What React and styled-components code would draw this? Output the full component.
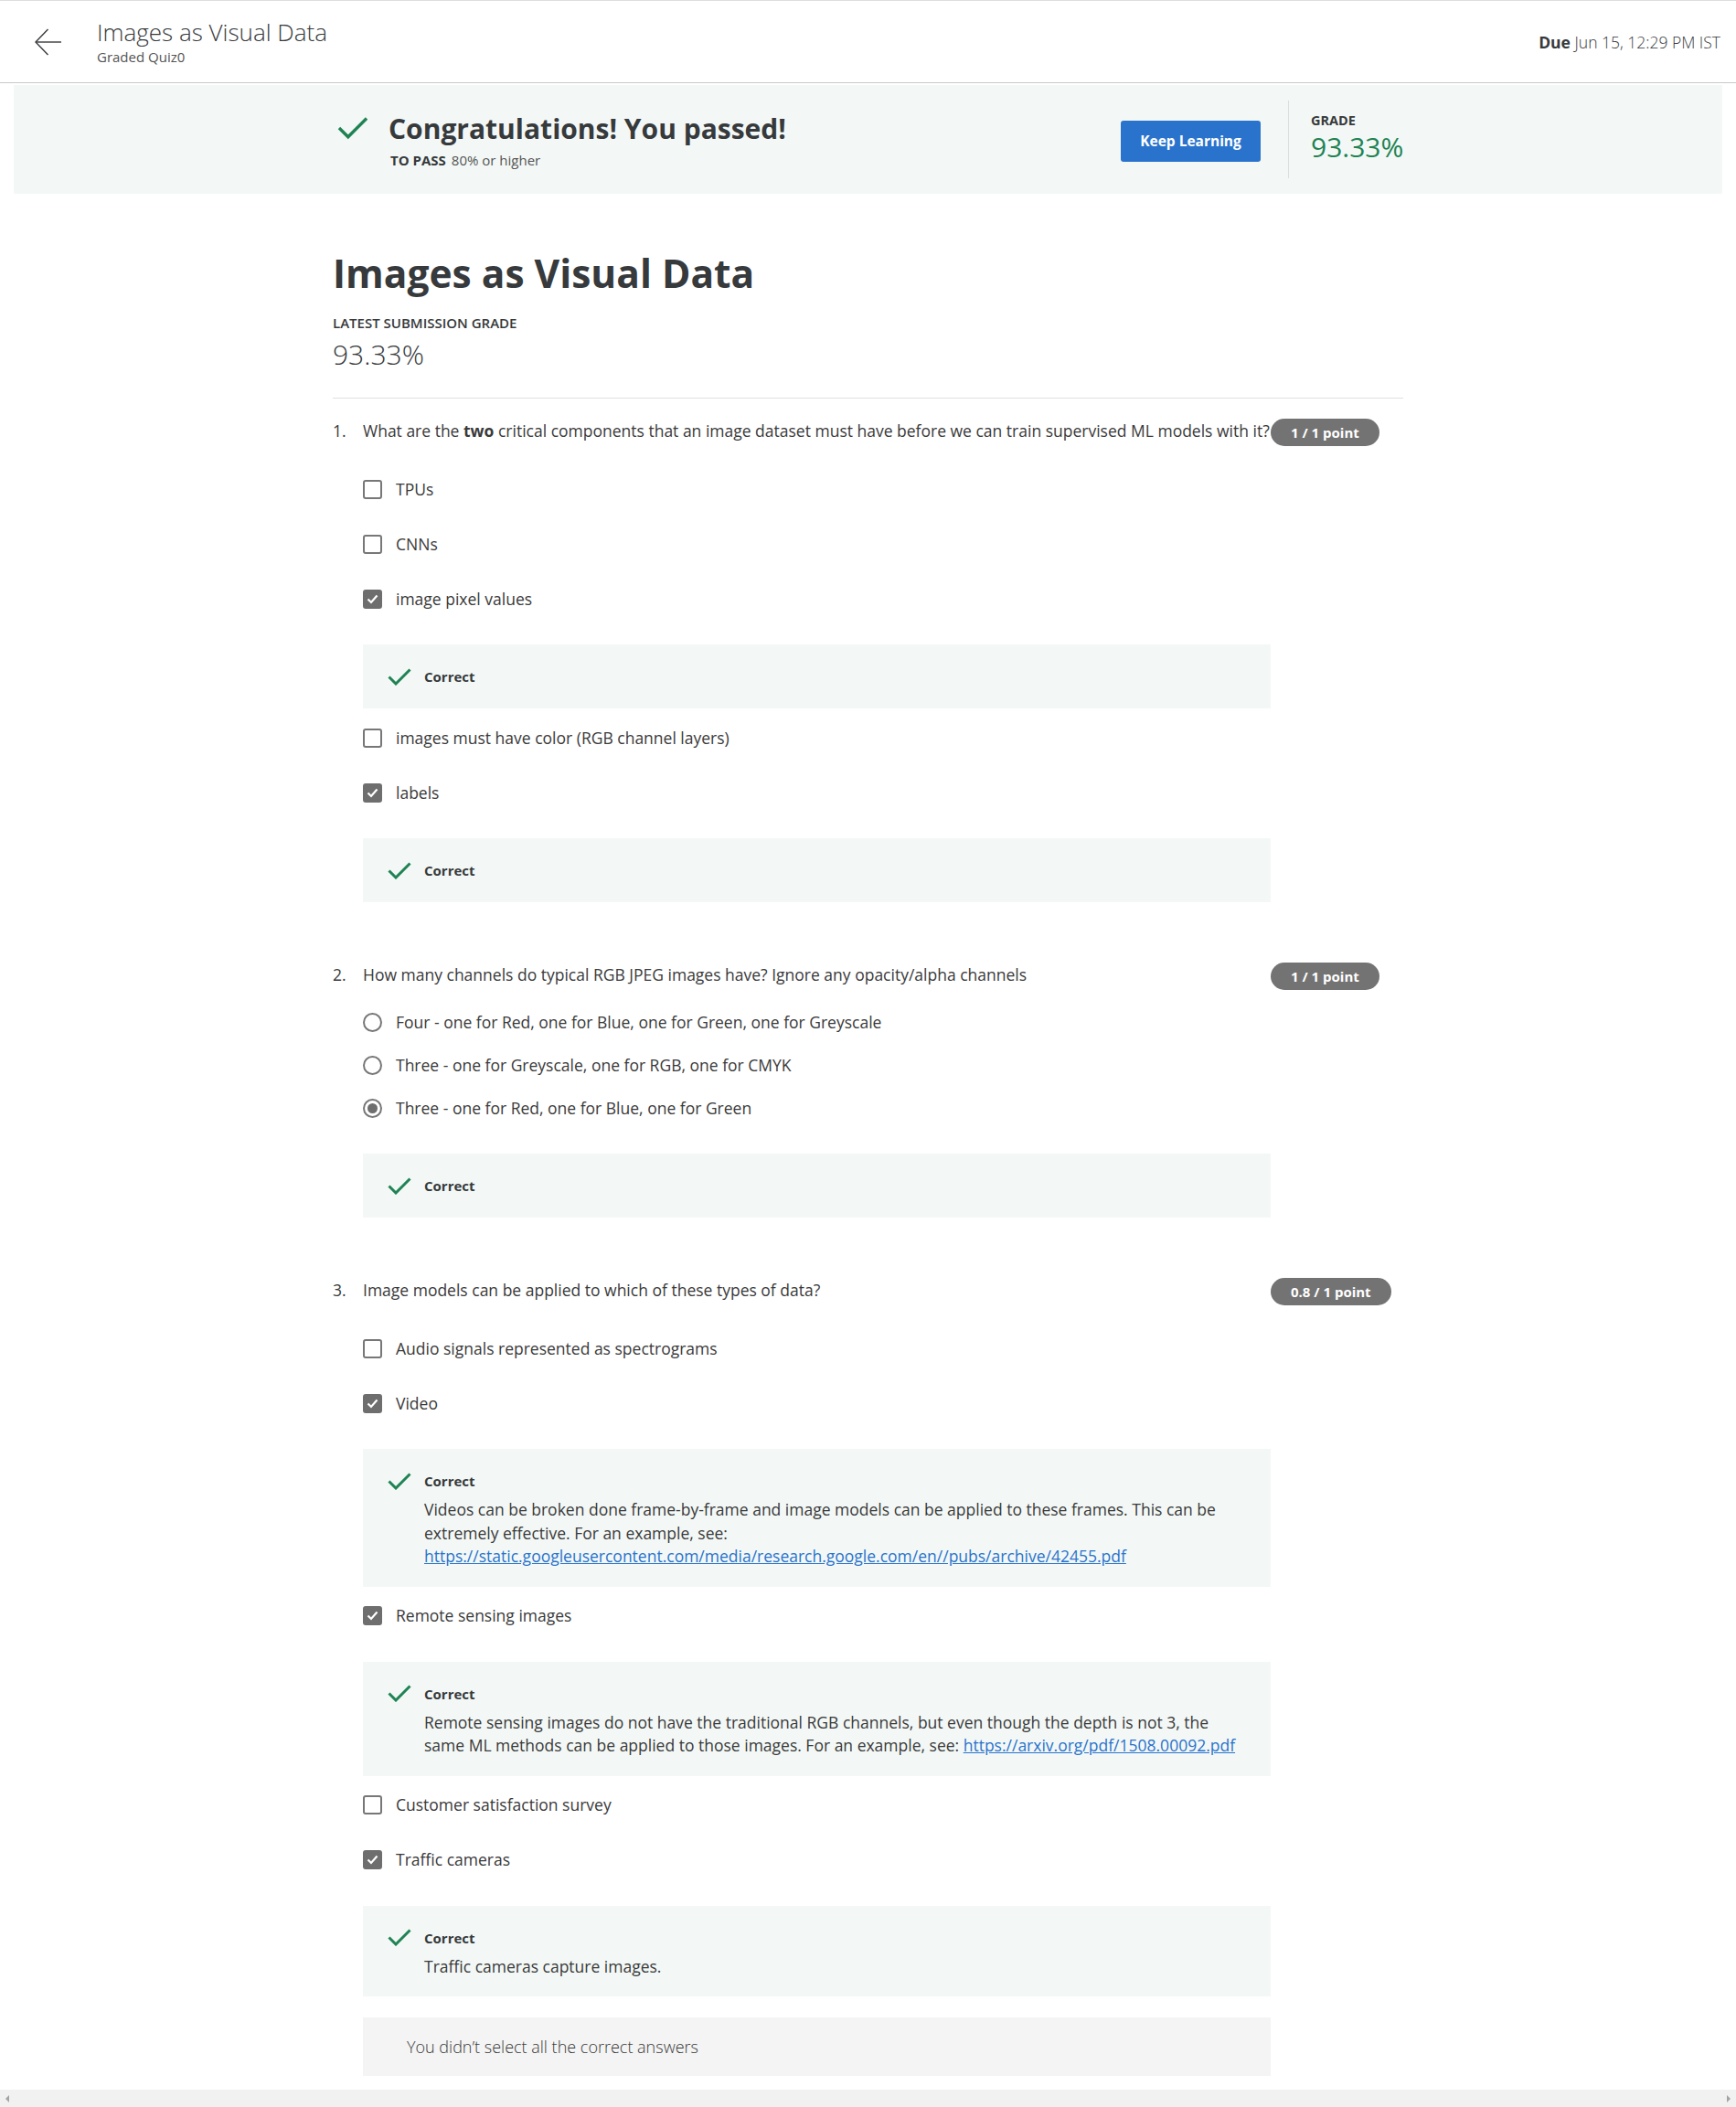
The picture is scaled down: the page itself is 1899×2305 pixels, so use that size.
import React from "react";
import styled, { createGlobalStyle } from "styled-components";

const GlobalStyle = createGlobalStyle`
  * { box-sizing: border-box; }
  body {
    margin: 0;
    background: #fff;
    color: #373a3c;
    font-family: "Open Sans", "Noto Sans", sans-serif;
  }
`;

const Page = styled.div`
  min-height: 100vh;
  display: flex;
  flex-direction: column;
  border-top: 1px solid #dddddd;
`;

const Header = styled.header`
  height: 90px;
  display: flex;
  align-items: center;
  padding: 0 17px 0 38px;
  border-bottom: 1px solid #c9c9c9;
`;

const BackButton = styled.button`
  width: 30px;
  height: 30px;
  padding: 0;
  border: 0;
  background: none;
  margin-right: 38px;
  display: flex;
  align-items: center;
  justify-content: center;
  cursor: pointer;
`;

const TitleBlock = styled.div`
  display: flex;
  flex-direction: column;
`;

const HeaderTitle = styled.div`
  font-size: 26px;
  line-height: 31px;
  font-weight: 300;
  color: #373a3c;
`;

const HeaderSub = styled.div`
  margin-top: 2px;
  font-size: 15px;
  line-height: 19px;
  color: #555;
`;

const Due = styled.div`
  margin-left: auto;
  font-size: 17.5px;
  font-weight: 300;
  color: #373a3c;
  b { font-weight: 700; }
`;

const Banner = styled.section`
  margin: 2px 15px 0;
  height: 119px;
  background: #f3f8f6;
`;

const BannerInner = styled.div`
  width: 1171px;
  height: 100%;
  margin: 0 auto;
  display: flex;
  align-items: center;
`;

const PassGroup = styled.div`
  flex: 1;
  display: flex;
  align-items: flex-start;
  padding-left: 5px;
`;

const BannerCheck = styled.svg`
  flex: none;
  margin: 7px 22px 0 0;
`;

const PassTitle = styled.h2`
  margin: 0;
  font-size: 30px;
  line-height: 41px;
  font-weight: 700;
  color: #373a3c;
`;

const PassReq = styled.div`
  margin-top: 4px;
  padding-left: 2px;
  font-size: 15px;
  line-height: 21px;
  color: #555;
  strong {
    color: #373a3c;
    font-weight: 700;
    margin-right: 6px;
  }
`;

const KeepButton = styled.button`
  width: 153px;
  height: 45px;
  margin-top: 3px;
  border: 0;
  border-radius: 3px;
  background: #2a73cc;
  color: #fff;
  font-family: inherit;
  font-size: 15.5px;
  font-weight: 700;
  cursor: pointer;
`;

const VDivider = styled.div`
  width: 1px;
  height: 85px;
  background: #dedede;
  margin: 0 24px 0 30px;
`;

const GradeBlock = styled.div`
  width: 101px;
  padding-bottom: 2px;
`;

const GradeLabel = styled.div`
  font-size: 14.5px;
  line-height: 20px;
  font-weight: 700;
  text-transform: uppercase;
  color: #373a3c;
`;

const GradeValue = styled.div`
  font-size: 30px;
  line-height: 41px;
  margin-top: -2px;
  font-weight: 400;
  color: #1f8354;
`;

const Main = styled.main`
  width: 1171px;
  margin: 0 auto;
  padding-bottom: 15px;
`;

const PageTitle = styled.h1`
  margin: 58px 0 0;
  font-size: 42.5px;
  line-height: 58px;
  font-weight: 700;
  color: #373a3c;
`;

const SubmissionLabel = styled.div`
  margin-top: 15px;
  font-size: 15px;
  line-height: 21px;
  font-weight: 600;
  text-transform: uppercase;
`;

const SubmissionGrade = styled.div`
  margin-top: 3px;
  font-size: 30px;
  line-height: 41px;
  font-weight: 300;
`;

const Rule = styled.div`
  margin-top: 27px;
  height: 1px;
  background: #e1e1e1;
`;

const QuestionList = styled.div`
  margin-top: 22px;
  display: flex;
  flex-direction: column;
  gap: 66px;
`;

const Question = styled.div`
  display: grid;
  grid-template-columns: 33px 993px 145px;
  font-size: 17.5px;
  color: #3a3a3a;
`;

const QNum = styled.div`
  line-height: 27px;
`;

const QBody = styled.div`
  min-width: 0;
`;

const Prompt = styled.div`
  line-height: 27px;
  white-space: nowrap;
  b { font-weight: 700; }
`;

const Badge = styled.span`
  justify-self: start;
  height: 30px;
  padding: 0 22px;
  border-radius: 15px;
  background: #737373;
  color: #fff;
  font-size: 15px;
  font-weight: 700;
  display: inline-flex;
  align-items: center;
  white-space: nowrap;
`;

const Options = styled.div`
  margin-top: ${(p) => p.$top}px;
  display: flex;
  flex-direction: column;
`;

const OptionRow = styled.div`
  height: 40px;
  display: flex;
  align-items: center;
  gap: 15px;
  line-height: 27px;
  margin-top: ${(p) => p.$gap}px;
  &:first-child { margin-top: 0; }
`;

const Box = styled.span`
  flex: none;
  width: 21px;
  height: 21px;
  border: 2px solid #777;
  border-radius: ${(p) => (p.$round ? "50%" : "3px")};
  background: ${(p) => (p.$filled ? "#6e6e6e" : "#fff")};
  border-color: ${(p) => (p.$filled ? "#6e6e6e" : "#777")};
  display: flex;
  align-items: center;
  justify-content: center;
`;

const RadioDot = styled.span`
  width: 11px;
  height: 11px;
  border-radius: 50%;
  background: #6e6e6e;
`;

const Feedback = styled.div`
  margin-top: 30px;
  background: #f3f8f6;
  padding: 24px 27px;
  display: grid;
  grid-template-columns: 26px 1fr;
  column-gap: 14px;
  & + ${OptionRow} { margin-top: 12px; }
`;

const FeedbackIcon = styled.svg`
  align-self: center;
`;

const FeedbackTitle = styled.div`
  font-size: 15px;
  line-height: 22px;
  font-weight: 700;
  color: #373a3c;
`;

const FeedbackText = styled.div`
  grid-column: 2;
  margin: 8px 0 -4px;
  font-size: 17.5px;
  line-height: 25.5px;
  color: #3a3a3a;
`;

const Link = styled.a`
  color: #2a73cc;
  text-decoration: underline;
`;

const Note = styled.div`
  margin-top: 23px;
  height: 64px;
  padding: 0 48px;
  display: flex;
  align-items: center;
  background: #f4f4f4;
  font-size: 18px;
  font-weight: 300;
  color: #3a3a3a;
`;

const Scrollbar = styled.div`
  margin-top: auto;
  height: 19px;
  flex: none;
  background: #f1f1f1;
  display: flex;
  align-items: center;
  justify-content: space-between;
  padding: 0 6px;
`;

const ScrollArrow = styled.span`
  width: 0;
  height: 0;
  border-top: 4px solid transparent;
  border-bottom: 4px solid transparent;
  ${(p) =>
    p.$dir === "left"
      ? "border-right: 4px solid #a3a3a3;"
      : "border-left: 4px solid #a3a3a3;"}
`;

const CheckMark = () => (
  <svg width="13" height="11" viewBox="0 0 13 11">
    <polyline points="1.5,5.5 5,9 11.5,1.5" fill="none" stroke="#fff" strokeWidth="2.2" />
  </svg>
);

const GreenCheck = () => (
  <FeedbackIcon width={26} height={19} viewBox="0 0 26 19">
    <polyline points="1.5,9.5 9,17 24.5,1.5" fill="none" stroke="#1f8354" strokeWidth="3" />
  </FeedbackIcon>
);

const questions = [
  {
    n: 1,
    type: "check",
    score: "1 / 1 point",
    prompt: (
      <>
        What are the <b>two</b> critical components that an image dataset must have before we can train supervised ML models with it?
      </>
    ),
    items: [
      { label: "TPUs" },
      { label: "CNNs" },
      { label: "image pixel values", checked: true, feedback: {} },
      { label: "images must have color (RGB channel layers)" },
      { label: "labels", checked: true, feedback: {} },
    ],
  },
  {
    n: 2,
    type: "radio",
    score: "1 / 1 point",
    prompt: <>How many channels do typical RGB JPEG images have? Ignore any opacity/alpha channels</>,
    items: [
      { label: "Four - one for Red, one for Blue, one for Green, one for Greyscale" },
      { label: "Three - one for Greyscale, one for RGB, one for CMYK" },
      { label: "Three - one for Red, one for Blue, one for Green", checked: true, feedback: {} },
    ],
  },
  {
    n: 3,
    type: "check",
    score: "0.8 / 1 point",
    prompt: <>Image models can be applied to which of these types of data?</>,
    items: [
      { label: "Audio signals represented as spectrograms" },
      {
        label: "Video",
        checked: true,
        feedback: {
          text: (
            <>
              Videos can be broken done frame-by-frame and image models can be applied to these frames. This can be extremely effective. For an example, see:{" "}
              <Link href="#">https://static.googleusercontent.com/media/research.google.com/en//pubs/archive/42455.pdf</Link>
            </>
          ),
        },
      },
      {
        label: "Remote sensing images",
        checked: true,
        feedback: {
          text: (
            <>
              Remote sensing images do not have the traditional RGB channels, but even though the depth is not 3, the same ML methods can be applied to those images. For an example, see:{" "}
              <Link href="#">https://arxiv.org/pdf/1508.00092.pdf</Link>
            </>
          ),
        },
      },
      { label: "Customer satisfaction survey" },
      {
        label: "Traffic cameras",
        checked: true,
        feedback: { text: <>Traffic cameras capture images.</> },
      },
    ],
    note: "You didn’t select all the correct answers",
  },
];

function QuestionBlock({ q }) {
  const radio = q.type === "radio";
  const rows = [];
  q.items.forEach((it, i) => {
    rows.push(
      <OptionRow key={"o" + i} $gap={radio ? 7 : 20}>
        <Box $round={radio} $filled={it.checked && !radio}>
          {it.checked && (radio ? <RadioDot /> : <CheckMark />)}
        </Box>
        <span>{it.label}</span>
      </OptionRow>
    );
    if (it.feedback) {
      rows.push(
        <Feedback key={"f" + i}>
          <GreenCheck />
          <FeedbackTitle>Correct</FeedbackTitle>
          {it.feedback.text && <FeedbackText>{it.feedback.text}</FeedbackText>}
        </Feedback>
      );
    }
  });
  return (
    <Question>
      <QNum>{q.n}.</QNum>
      <QBody>
        <Prompt>{q.prompt}</Prompt>
        <Options $top={radio ? 18 : 30}>{rows}</Options>
        {q.note && <Note>{q.note}</Note>}
      </QBody>
      <Badge>{q.score}</Badge>
    </Question>
  );
}

export default function App() {
  return (
    <>
      <GlobalStyle />
      <Page>
        <Header>
          <BackButton aria-label="Back">
            <svg width="30" height="30" viewBox="0 0 30 30">
              <line x1="1" y1="15" x2="29" y2="15" stroke="#373a3c" strokeWidth="1.4" />
              <polyline points="14.5,1 1,15 14.5,29" fill="none" stroke="#373a3c" strokeWidth="1.4" />
            </svg>
          </BackButton>
          <TitleBlock>
            <HeaderTitle>Images as Visual Data</HeaderTitle>
            <HeaderSub>Graded Quiz0</HeaderSub>
          </TitleBlock>
          <Due>
            <b>Due</b> Jun 15, 12:29 PM IST
          </Due>
        </Header>

        <Banner>
          <BannerInner>
            <PassGroup>
              <BannerCheck width="34" height="26" viewBox="0 0 26 19">
                <polyline points="1.5,9.5 9,17 24.5,1.5" fill="none" stroke="#1f8354" strokeWidth="2.6" />
              </BannerCheck>
              <div>
                <PassTitle>Congratulations! You passed!</PassTitle>
                <PassReq>
                  <strong>TO PASS</strong>80% or higher
                </PassReq>
              </div>
            </PassGroup>
            <KeepButton>Keep Learning</KeepButton>
            <VDivider />
            <GradeBlock>
              <GradeLabel>Grade</GradeLabel>
              <GradeValue>93.33%</GradeValue>
            </GradeBlock>
          </BannerInner>
        </Banner>

        <Main>
          <PageTitle>Images as Visual Data</PageTitle>
          <SubmissionLabel>Latest Submission Grade</SubmissionLabel>
          <SubmissionGrade>93.33%</SubmissionGrade>
          <Rule />
          <QuestionList>
            {questions.map((q) => (
              <QuestionBlock key={q.n} q={q} />
            ))}
          </QuestionList>
        </Main>

        <Scrollbar>
          <ScrollArrow $dir="left" />
          <ScrollArrow $dir="right" />
        </Scrollbar>
      </Page>
    </>
  );
}
